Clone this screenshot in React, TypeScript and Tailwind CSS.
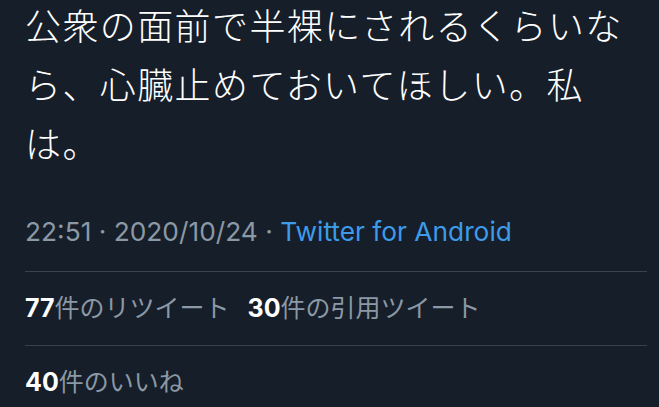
export default function App() {
  const jp = "font-['Inter','Noto_Sans_CJK_JP',sans-serif]";
  return (
    <div className={`w-[659px] h-[407px] overflow-hidden bg-[#161e29] pl-[25px] pr-[12px] ${jp}`}>
      <p className="-mt-[2px] text-[36px] leading-[59px] tracking-[1.4px] text-white font-light">
        公衆の面前で半裸にされるくらいなら、心臓止めておいてほしい。私は。
      </p>
      <div className="mt-[41px] text-[26.3px] leading-[32px] text-[#8b98a5] pb-[23px]">
        22:51 · 2020/10/24 · <span className="text-[#3d9be9]">Twitter for Android</span>
      </div>
      <div className="border-t border-[#38444d] h-[74px] flex items-center text-[25px] text-[#8b98a5]">
        <span className="font-bold text-white">77</span>
        <span>件のリツイート</span>
        <span className="ml-[18px] font-bold text-white">30</span>
        <span>件の引用ツイート</span>
      </div>
      <div className="border-t border-[#38444d] h-[74px] flex items-center text-[25px] text-[#8b98a5]">
        <span className="font-bold text-white">40</span>
        <span>件のいいね</span>
      </div>
    </div>
  );
}
